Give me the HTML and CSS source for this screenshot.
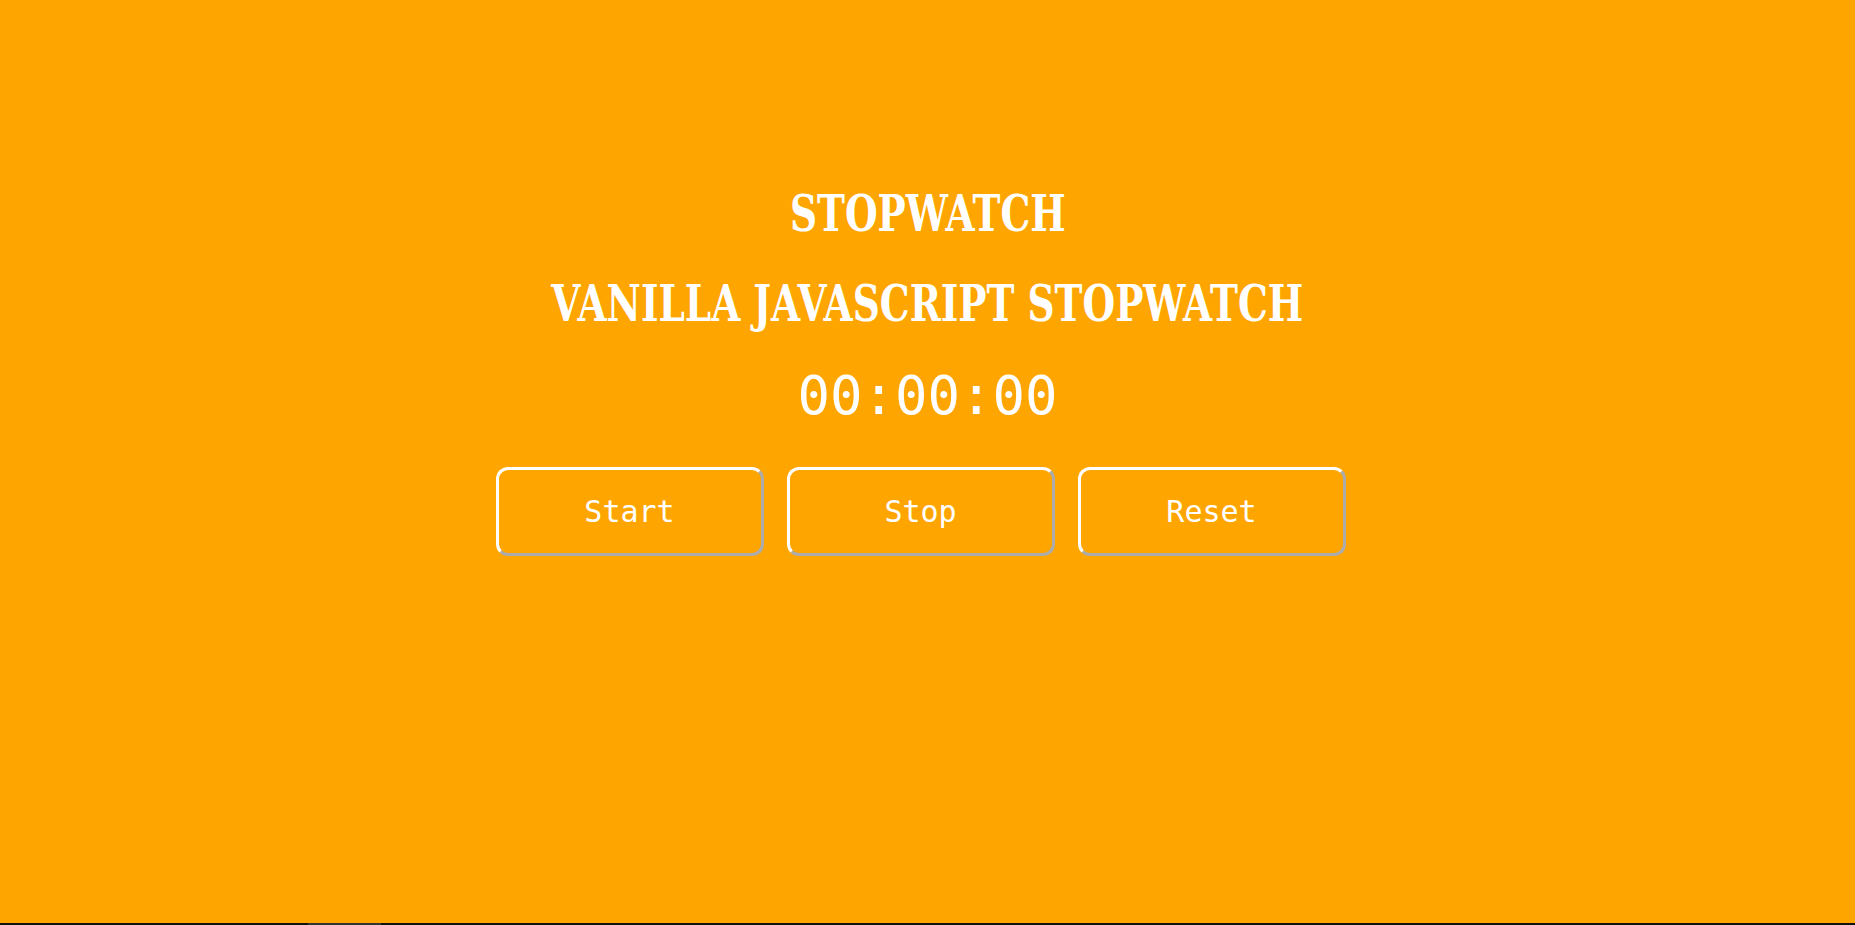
FILE: index.html
```html
<!DOCTYPE html>
<html lang="en">
<head>
<meta charset="utf-8">
<title>Stopwatch</title>
<link rel="stylesheet" href="styles.css">
</head>
<body>
<main class="app">
  <h1 class="title">STOPWATCH</h1>
  <h2 class="subtitle">VANILLA JAVASCRIPT STOPWATCH</h2>
  <div class="time">00:00:00</div>
  <div class="controls">
    <button class="btn">Start</button>
    <button class="btn">Stop</button>
    <button class="btn">Reset</button>
  </div>
</main>
<div class="scrollbar"><div class="thumb"></div></div>
</body>
</html>
```
FILE: styles.css
```css
html, body {
  margin: 0;
  padding: 0;
  height: 100%;
}
body {
  background: #ffa500;
  color: #fff;
  overflow: hidden;
}
.app {
  display: flex;
  flex-direction: column;
  align-items: center;
  padding-top: 184px;
}
.title, .subtitle {
  margin: 0;
  font-family: "DejaVu Serif", serif;
  font-weight: bold;
  font-size: 50px;
  line-height: 60px;
  transform: scaleX(0.75);
}
.subtitle {
  margin-top: 30px;
}
.time {
  margin-top: 30px;
  font-family: "DejaVu Sans Mono", monospace;
  font-size: 54px;
  line-height: 64px;
}
.controls {
  display: flex;
  gap: 23px;
  padding-right: 14px;
  margin-top: 39px;
}
.btn {
  width: 268px;
  height: 89px;
  box-sizing: border-box;
  background: transparent;
  color: #fff;
  border: 3px outset #fff;
  border-radius: 12px;
  font-family: "DejaVu Sans Mono", monospace;
  font-size: 30px;
  padding: 0;
}
.scrollbar {
  position: fixed;
  left: 0;
  right: 0;
  bottom: 0;
  height: 2px;
  background: #111;
}
.thumb {
  margin-left: 308px;
  width: 73px;
  height: 2px;
  background: #333;
}
```
